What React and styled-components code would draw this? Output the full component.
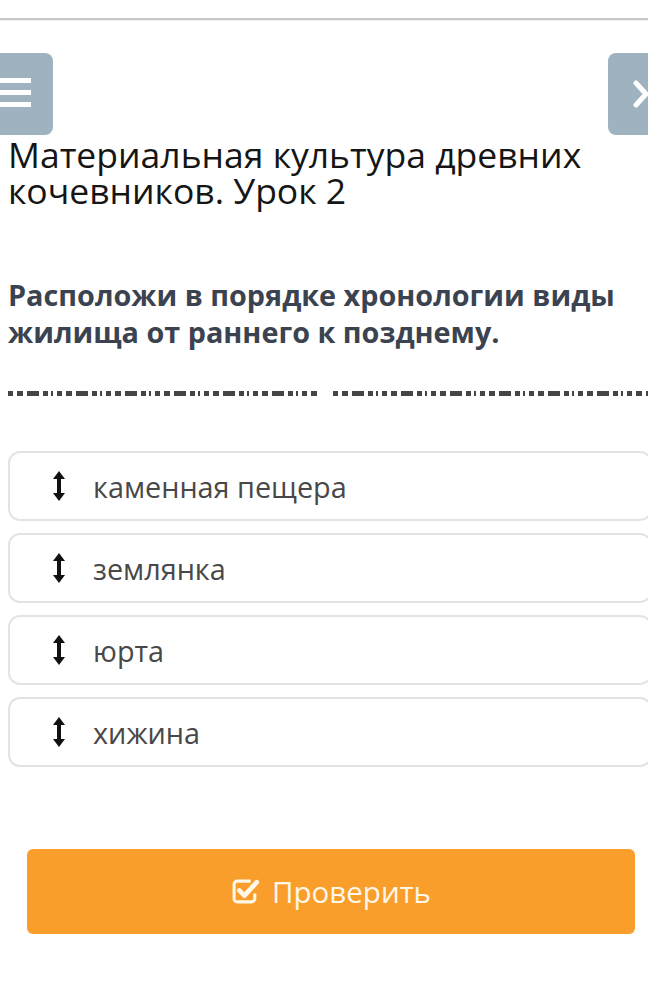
import React from "react";
import styled, { createGlobalStyle } from "styled-components";

const GlobalStyle = createGlobalStyle`
  html, body {
    margin: 0;
    padding: 0;
    background: #ffffff;
    font-family: "Open Sans", "Noto Sans", sans-serif;
    overflow-x: hidden;
  }
  #root {
    width: 648px;
    overflow: hidden;
  }
`;

const Page = styled.div`
  width: 648px;
  min-height: 1004px;
  display: flex;
  flex-direction: column;
`;

const TopBar = styled.div`
  height: 18px;
  border-bottom: 2px solid #c8c8c8;
  box-shadow: 0 1px 1px rgba(0, 0, 0, 0.06);
`;

const NavRow = styled.div`
  margin-top: 33px;
  height: 82px;
  display: flex;
  justify-content: space-between;
`;

const SideButton = styled.button`
  width: ${(p) => (p.$side === "left" ? "53px" : "40px")};
  height: 82px;
  border: none;
  padding: 0;
  background: #9fb2c0;
  border-radius: ${(p) => (p.$side === "left" ? "0 8px 8px 0" : "8px 0 0 8px")};
  display: flex;
  align-items: center;
  justify-content: ${(p) => (p.$side === "left" ? "flex-start" : "flex-end")};
  overflow: hidden;
`;

const Burger = styled.div`
  width: 31px;
  display: flex;
  flex-direction: column;
  gap: 7px;
  margin-top: -3px;

  > span {
    height: 5px;
    background: #ffffff;
  }
`;

const Title = styled.h1`
  margin: 1px 0 0;
  padding: 0 8px;
  font-size: 35.5px;
  line-height: 36px;
  font-weight: 400;
  color: #151515;
`;

const Question = styled.h2`
  margin: 68px 0 0;
  padding: 0 8px;
  font-size: 28.8px;
  line-height: 37px;
  font-weight: 700;
  color: #3c4350;
`;

const Divider = styled.div`
  margin-top: 41px;
  height: 5px;
  display: flex;
  gap: 15px;
  padding-left: 8px;

  > span {
    height: 5px;
    background: repeating-linear-gradient(
      90deg,
      #454545 0 5px,
      transparent 5px 9px,
      #454545 9px 15px,
      transparent 15px 19px,
      #454545 19px 31px,
      transparent 31px 35px,
      #454545 35px 40px,
      transparent 40px 43px,
      #454545 43px 45px,
      transparent 45px 49px
    );
  }
`;

const List = styled.div`
  margin-top: 55px;
  margin-left: 8px;
  width: 644px;
  display: flex;
  flex-direction: column;
  gap: 12px;
`;

const Item = styled.div`
  height: 70px;
  box-sizing: border-box;
  border: 2px solid #e3e3e3;
  border-radius: 12px;
  display: flex;
  align-items: center;
  gap: 27px;
  padding-left: 42px;
  font-size: 28.8px;
  color: #484848;
`;

const CheckButton = styled.button`
  margin: 82px 0 0 27px;
  width: 608px;
  height: 85px;
  border: none;
  border-radius: 6px;
  background: #f99e2b;
  color: #fff8ea;
  font-family: "Open Sans", "Noto Sans", sans-serif;
  font-size: 29.5px;
  display: flex;
  align-items: center;
  justify-content: center;
  gap: 10px;
`;

function DragIcon() {
  return (
    <svg width="14" height="30" viewBox="0 0 14 30">
      <path d="M7 0 L13 8 H9 V22 H13 L7 30 L1 22 H5 V8 H1 Z" fill="#111" />
    </svg>
  );
}

function CheckIcon() {
  return (
    <svg width="31" height="27" viewBox="0 0 30 26">
      <path
        d="M19 3 H6 A3 3 0 0 0 3 6 V20 A3 3 0 0 0 6 23 H20 A3 3 0 0 0 23 20 V15"
        fill="none"
        stroke="#fff8ea"
        strokeWidth="3"
      />
      <path
        d="M8 12 L13 17 L25 4"
        fill="none"
        stroke="#fff8ea"
        strokeWidth="4.5"
        strokeLinecap="round"
        strokeLinejoin="round"
      />
    </svg>
  );
}

const items = ["каменная пещера", "землянка", "юрта", "хижина"];

export default function App() {
  return (
    <Page>
      <GlobalStyle />
      <TopBar />
      <NavRow>
        <SideButton $side="left" aria-label="Меню">
          <Burger>
            <span />
            <span />
            <span />
          </Burger>
        </SideButton>
        <SideButton $side="right" aria-label="Закрыть">
          <svg width="15" height="28" viewBox="0 0 15 28">
            <path
              d="M3 3 L13 14 L3 25"
              fill="none"
              stroke="#fff"
              strokeWidth="5"
              strokeLinecap="round"
              strokeLinejoin="round"
            />
          </svg>
        </SideButton>
      </NavRow>
      <Title>Материальная культура древних кочевников. Урок 2</Title>
      <Question>Расположи в порядке хронологии виды жилища от раннего к позднему.</Question>
      <Divider>
        <span style={{ width: 310 }} />
        <span style={{ width: 315 }} />
      </Divider>
      <List>
        {items.map((t) => (
          <Item key={t}>
            <DragIcon />
            {t}
          </Item>
        ))}
      </List>
      <CheckButton>
        <CheckIcon />
        Проверить
      </CheckButton>
    </Page>
  );
}
